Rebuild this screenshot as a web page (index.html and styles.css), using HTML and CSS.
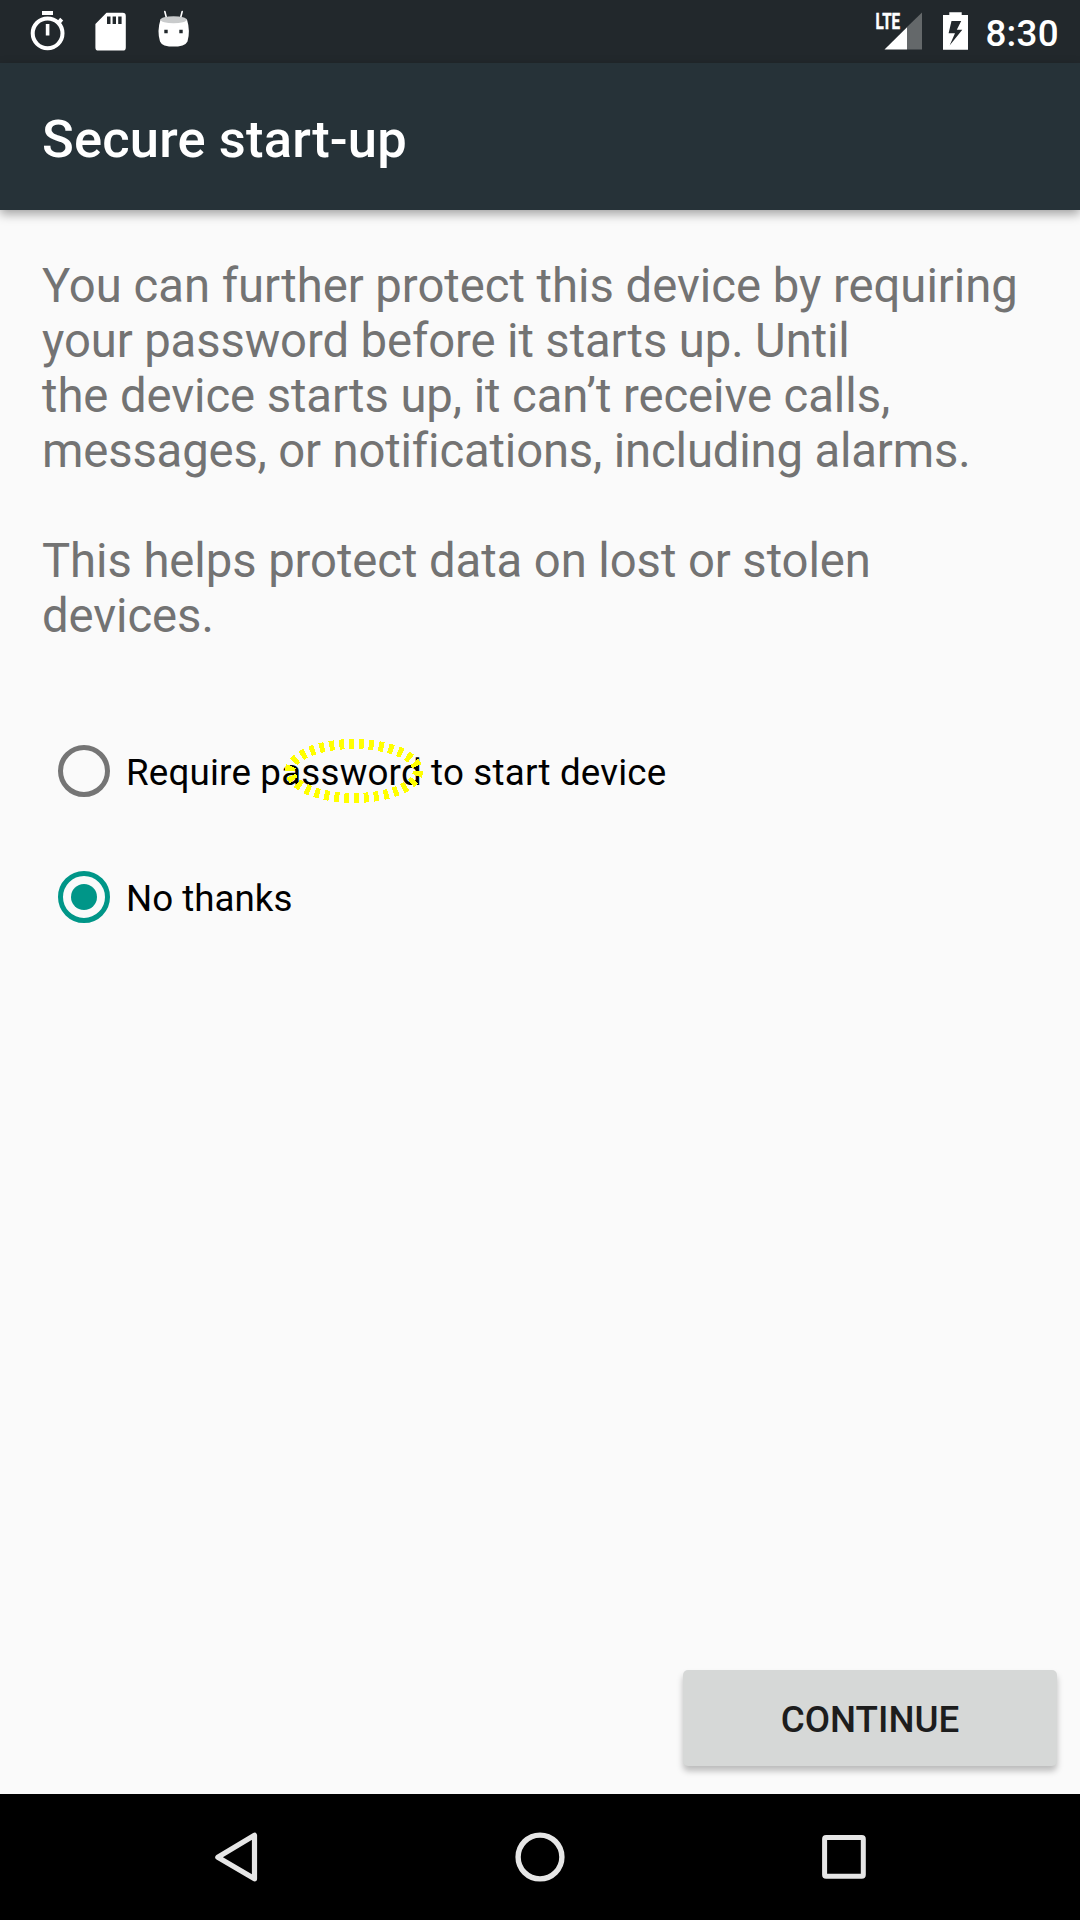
FILE: index.html
```html
<!DOCTYPE html>
<html lang="en">
<head>
<meta charset="utf-8">
<title>Secure start-up</title>
<link rel="stylesheet" href="styles.css">
</head>
<body>
<div class="screen">
  <div class="status-bar">
    <svg class="status-left" width="220" height="63" viewBox="0 0 220 63" aria-hidden="true">
      <!-- stopwatch -->
      <circle cx="47.6" cy="33.3" r="14.9" fill="none" stroke="#fff" stroke-width="4"/>
      <path d="M42 11h11v4H42zM45.8 24h3.6v11.6h-3.6z" fill="#fff"/>
      <path d="M58.5 22.8l3.2-3.6" stroke="#fff" stroke-width="4"/>
      <!-- memory card -->
      <path fill="#fff" fill-rule="evenodd" d="M106.5 12.8h16a3.2 3.2 0 0 1 3.3 3.2v31.4a3.2 3.2 0 0 1-3.3 3.2H98.700a3.200 3.200 0 0 1-3.300-3.200V24zM107 16.500v7.500h3.500v-7.500zM112.600 16.500v7.500h3.400v-7.500zM118.200 16.500v7.500h3.400v-7.500z"/>
      <!-- robot head -->
      <path d="M164.800 11.500l1.800 7M182.200 11.500l-1.800 7" stroke="#fff" stroke-width="1.600" stroke-linecap="round"/>
      <path fill="#fff" fill-rule="evenodd" d="M160.500 19.500Q173.500 15.500 187 19.500Q190.500 31 187.500 41.500Q186 44.500 182.500 45.400Q173.500 47.800 164.500 45.400Q161.300 44.500 160 41.500Q156.800 31 160.500 19.500zM164.300 29.800v3.400h3.400v-3.400zM179.300 29.800v3.400h3.400v-3.400z"/>
      <ellipse cx="173.600" cy="19.700" rx="13.200" ry="3.500" fill="#c9cbcc"/>
    </svg>
    <div class="status-right">
      <svg width="110" height="63" viewBox="870 0 110 63" aria-hidden="true">
        <text class="lte" x="875.600" y="28.900" textLength="24.500" lengthAdjust="spacingAndGlyphs">LTE</text>
        <path d="M907 27v22.600h15V12.600z" fill="#64686a"/>
        <path d="M884.500 49.600H907V27.200z" fill="#fff"/>
        <path fill="#fff" fill-rule="evenodd" d="M949.300 12.300h12.400v2.700H968v34.800h-25V15h6.300zM951.500 21L948.600 33.300H955L949.600 45.600L962.300 29.700H956.800L961.200 21z"/>
      </svg>
      <span class="clock">8:30</span>
    </div>
  </div>
  <header class="app-bar"><h1>Secure start-up</h1></header>
  <main class="content">
    <p class="message"><span class="line-open">You can further protect this device by requiring</span> <span class="line-tight">your password before it starts up. Until</span> <span class="line-mid">the&nbsp;device starts up, it can’t receive calls,</span> <span class="line-tightest">messages, or notifications, including alarms.</span></p>
    <p class="message line-mid">This helps protect data on lost or stolen devices.</p>
    <div class="choices">
      <div class="choice">
        <span class="radio"></span><span class="label wide">Require password to start device</span>
        <svg class="highlight" width="144" height="72" viewBox="0 0 144 72" aria-hidden="true">
          <ellipse cx="72" cy="36" rx="64" ry="27" pathLength="300" fill="none" stroke="#ff0" stroke-width="10" stroke-dasharray="5 5" shape-rendering="crispEdges"/>
        </svg>
      </div>
      <div class="choice"><span class="radio checked"></span><span class="label">No thanks</span></div>
    </div>
    <button class="continue" type="button">CONTINUE</button>
  </main>
  <nav class="nav-bar">
    <svg width="1080" height="126" viewBox="0 0 1080 126" fill="none" stroke="#e6e6e6" aria-hidden="true">
      <path d="M217.800 63.200L254.500 41.300V84.800z" stroke-width="5.200" stroke-linejoin="round"/>
      <circle cx="540" cy="63" r="21.900" stroke-width="5.400"/>
      <rect x="824.600" y="43.600" width="38.700" height="38.700" rx="1.500" stroke-width="5"/>
    </svg>
  </nav>
</div>
</body>
</html>
```
FILE: styles.css
```css
* { box-sizing: border-box; }
body { margin: 0; font-family: Roboto, sans-serif; }
.screen { width: 1080px; height: 1920px; display: flex; flex-direction: column; background: #fafafa; overflow: hidden; }
.status-bar { height: 63px; flex: none; display: flex; justify-content: space-between; background: #22282c; color: #fff; }
.status-right { display: flex; align-items: center; padding-right: 21px; gap: 5px; }
.lte { font: 700 22.5px Roboto, sans-serif; fill: #fff; stroke: #fff; stroke-width: .5px; }
.clock { font-size: 36.75px; font-weight: 500; line-height: 63px; padding-top: 4px; letter-spacing: .3px; }
.app-bar { height: 147px; flex: none; display: flex; align-items: center; padding: 0 42px; background: #263238; color: #fff; box-shadow: 0 4px 10px rgba(0, 0, 0, .36); }
h1 { margin: 4px 0 0; font-size: 52.5px; font-weight: 500; line-height: 62px; letter-spacing: .16px; }
.content { flex: 1; display: flex; flex-direction: column; padding: 49px 42px 0; }
.message { margin: 0 0 55px; font-size: 47.25px; line-height: 55px; color: #737373; }
.line-open { letter-spacing: -.025px; }
.line-mid { letter-spacing: -.08px; }
.line-tight { letter-spacing: -.115px; }
.line-tightest { letter-spacing: -.165px; }
.choices { display: flex; flex-direction: column; margin-top: 9px; }
.choice { position: relative; height: 126px; display: flex; align-items: center; gap: 16px; padding-left: 16px; font-size: 36.75px; line-height: 43px; color: #000; }
.label { padding-top: 2px; }
.wide { letter-spacing: .18px; }
.radio { width: 52px; height: 52px; flex: none; display: grid; place-items: center; border: 5px solid #757575; border-radius: 50%; }
.radio.checked { border-color: #009688; }
.radio.checked::after { content: ""; width: 26px; height: 26px; border-radius: 50%; background: #009688; }
.highlight { position: absolute; left: 240px; top: 27px; }
.continue { align-self: flex-end; margin: auto -19px 28px 0; width: 374px; height: 96px; padding: 2px 0 0; border: 0; border-radius: 5px; background: #d6d8d7; color: #1d1d1d; font: 500 36.75px Roboto, sans-serif; box-shadow: 0 5px 6px rgba(0, 0, 0, .25); }
.nav-bar { height: 126px; flex: none; background: #000; }
.nav-bar svg { display: block; }
```
